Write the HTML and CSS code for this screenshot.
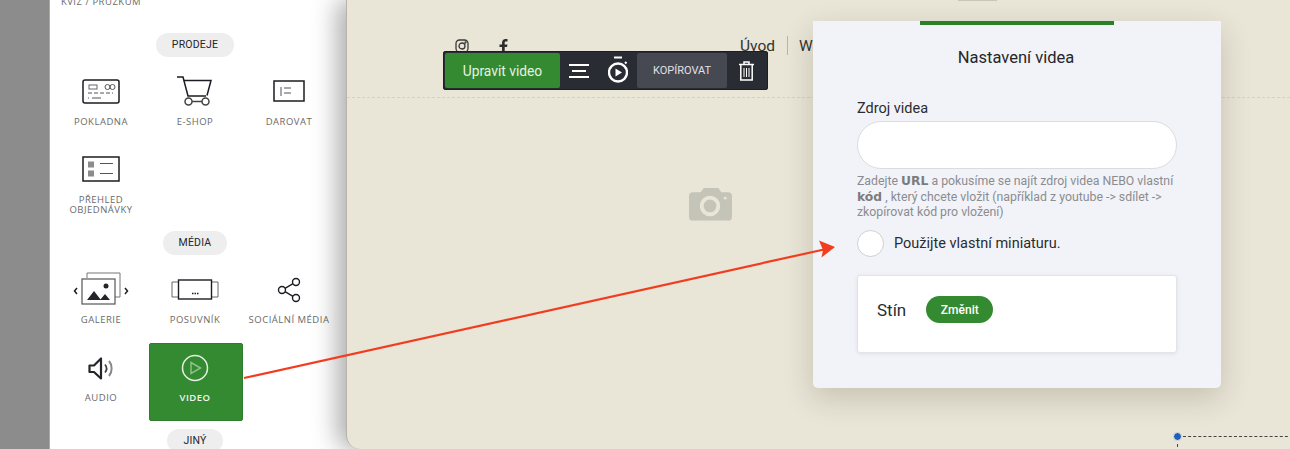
FILE: index.html
```html
<!DOCTYPE html>
<html lang="cs">
<head>
<meta charset="utf-8">
<title>Nastavení videa</title>
<link rel="stylesheet" href="styles.css">
</head>
<body>
<div class="app">
  <div class="rail"></div>
  <aside class="sidebar">
    <div class="grid first-grid">
      <div class="item"><div class="icon"></div><div class="label">KVÍZ / PRŮZKUM</div></div>
    </div>
    <div class="pill-row"><span class="pill">PRODEJE</span></div>
    <div class="grid">
      <div class="item">
        <div class="icon"><svg width="38" height="25" viewBox="0 0 38 25" fill="none" stroke="#1b1d22"><rect x="1" y="1" width="36" height="23" rx="2" stroke-width="1.5"/><rect x="7" y="6" width="8" height="4" stroke="#666"/><circle cx="25.500" cy="8" r="2.500" stroke="#555"/><circle cx="30.500" cy="8" r="2.500" stroke="#555"/><path d="M6 14h25" stroke="#555" stroke-dasharray="4 2"/><path d="M6 19h1M10 19h9" stroke="#555"/></svg></div>
        <div class="label">POKLADNA</div>
      </div>
      <div class="item">
        <div class="icon"><svg width="36" height="30" viewBox="0 0 36 30" fill="none" stroke="#1b1d22" stroke-width="1.500"><path d="M0 1h6l5 19h18"/><path d="M7 4.500h27l-4 15"/><circle cx="11.500" cy="25.500" r="3.500" stroke="#444"/><circle cx="28.500" cy="25.500" r="3.500" stroke="#444"/><path d="M15 25.500h10" stroke="#444"/></svg></div>
        <div class="label">E-SHOP</div>
      </div>
      <div class="item">
        <div class="icon"><svg width="32" height="22" viewBox="0 0 32 22" fill="none" stroke="#1b1d22"><rect x="1" y="1" width="30" height="20" stroke-width="1.500"/><path d="M8 7v9M11 8h7M11 13h7" stroke="#555"/></svg></div>
        <div class="label">DAROVAT</div>
      </div>
      <div class="item">
        <div class="icon"><svg width="38" height="26" viewBox="0 0 38 26" fill="none" stroke="#1b1d22"><rect x="1" y="1" width="36" height="24" stroke-width="1.500"/><path d="M6 5.500h6v6H6zM6 14.500h6v6H6z" fill="#8c8c8c" stroke="none"/><path d="M18 7.500h13M18 17.500h13" stroke="#555"/></svg></div>
        <div class="label">PŘEHLED OBJEDNÁVKY</div>
      </div>
    </div>
    <div class="pill-row"><span class="pill">MÉDIA</span></div>
    <div class="grid">
      <div class="item">
        <div class="icon"><svg width="56" height="34" viewBox="0 0 56 34" fill="none" stroke="#555"><path d="M14 6V1h33v24h-6" stroke="#777"/><rect x="9" y="7" width="33" height="25" stroke-width="1.200" fill="#fff"/><path d="M14 28l7-9 7 9zM27 28l5-6 5 6z" fill="#23252b" stroke="none"/><circle cx="33" cy="14" r="2.500" fill="#23252b" stroke="none"/><path d="M4 16l-2.500 3L4 22M52 16l2.500 3L52 22" stroke="#1b1d22" stroke-width="1.500"/></svg></div>
        <div class="label">GALERIE</div>
      </div>
      <div class="item">
        <div class="icon"><svg width="48" height="21" viewBox="0 0 48 21" fill="none"><path d="M7 3H1v15h6M41 3h6v15h-6" stroke="#666"/><rect x="7.500" y="1" width="33" height="19" stroke="#1b1d22" stroke-width="1.400"/><path d="M21 14.500h1.500M23.500 14.500H25M26 14.500h1.500" stroke="#1b1d22" stroke-width="1.500"/></svg></div>
        <div class="label">POSUVNÍK</div>
      </div>
      <div class="item low">
        <div class="icon"><svg width="24" height="26" viewBox="0 0 24 26" fill="none" stroke="#1b1d22" stroke-width="1.400"><circle cx="5" cy="13" r="3.500"/><circle cx="19" cy="5" r="3.500"/><circle cx="19" cy="21" r="3.500"/><path d="M8 11.300l8-4.600M8 14.700l8 4.600"/></svg></div>
        <div class="label">SOCIÁLNÍ MÉDIA</div>
      </div>
      <div class="item low">
        <div class="icon"><svg width="26" height="25" viewBox="0 0 26 25" fill="none"><path d="M1.500 9.500h4.500l7-7v20l-7-6.500H1.500z" stroke="#23252b" stroke-width="2.200" stroke-linejoin="round"/><path d="M17 8.500c2 2.500 2 5.500 0 8" stroke="#444" stroke-width="1.800"/><path d="M21 5c3.500 4 3.500 11 0 15" stroke="#888" stroke-width="2"/></svg></div>
        <div class="label">AUDIO</div>
      </div>
      <div class="item active">
        <div class="icon"><svg width="28" height="28" viewBox="0 0 28 28" fill="none"><circle cx="14" cy="14" r="12.500" stroke="#e6f0e4" stroke-width="1.500"/><path d="M10 8.500l9.500 5.500-9.500 5.500z" stroke="#8fc08a" stroke-width="1.500"/></svg></div>
        <div class="label">VIDEO</div>
      </div>
    </div>
    <div class="pill-row"><span class="pill">JINÝ</span></div>
  </aside>
  <main class="canvas">
    <span class="top-mark"></span>
    <header class="site-head">
      <svg class="social" width="14" height="14" viewBox="0 0 14 14" fill="none" stroke="#3a3a3a" stroke-width="1.300"><rect x="1" y="1" width="12" height="12" rx="3.500"/><circle cx="7" cy="7" r="3"/><circle cx="10.500" cy="3.500" r=".5"/></svg>
      <svg class="social" width="9" height="14" viewBox="0 0 9 14"><path d="M3 14V8H.5V5.500H3V4c0-2.500 1.500-4 3.500-4H8.500v2.500H7c-1 0-1.300.5-1.300 1.300v1.700h2.800L8 8H5.700v6z" fill="#2e2e2e"/></svg>
      <nav class="site-nav"><span>Úvod</span><i></i><span>Web</span></nav>
    </header>
    <div class="placeholder"><svg width="43" height="34" viewBox="0 0 44 34"><path d="M4 5h8l3-4.500h15L33 5h7a4 4 0 0 1 4 4v21a4 4 0 0 1-4 4H4a4 4 0 0 1-4-4V9a4 4 0 0 1 4-4z" fill="#c4c4b9"/><circle cx="21.500" cy="19" r="8.500" fill="#c4c4b9" stroke="#e9e5d7" stroke-width="4"/><circle cx="37" cy="11" r="1.500" fill="#e9e5d7"/></svg></div>
    <div class="corner-marker"><span class="dot"></span><span class="dash-h"></span><span class="dash-v"></span></div>
  </main>

  <div class="toolbar">
    <button class="tb-edit">Upravit video</button>
    <span class="tb-ic tb-align"><svg width="20" height="14" viewBox="0 0 20 14" stroke="#fff" stroke-width="2"><path d="M0 1h20M3 7h14M0 13h20"/></svg></span>
    <span class="tb-ic tb-timer"><svg width="20" height="30" viewBox="0 0 20 30" fill="none"><path d="M6 1.500h8" stroke="#fff" stroke-width="2"/><circle cx="10" cy="16.500" r="9" stroke="#fff" stroke-width="2.400"/><path d="M7.500 12.500l6.500 4-6.500 4z" fill="#fff"/><path d="M17 6l1.500 1.500" stroke="#fff" stroke-width="2"/></svg></span>
    <button class="tb-copy">KOPÍROVAT</button>
    <span class="tb-ic tb-trash"><svg width="15" height="20" viewBox="0 0 15 20" fill="none" stroke="#fff"><path d="M0 3.500h15" stroke-width="1.500"/><path d="M5 3V1h5v2" stroke-width="1.500"/><path d="M1.800 4v15h11.400V4" stroke-width="1.500"/><path d="M5 7v9M7.500 7v9M10 7v9"/></svg></span>
  </div>

  <section class="panel">
    <div class="panel-accent"></div>
    <h2 class="panel-title">Nastavení videa</h2>
    <label class="field-label">Zdroj videa</label>
    <div class="input"></div>
    <p class="help">Zadejte <b>URL</b> a pokusíme se najít zdroj videa NEBO vlastní <b>kód</b> , který chcete vložit (například z youtube -&gt; sdílet -&gt; zkopírovat kód pro vložení)</p>
    <div class="check-row"><span class="check"></span><span>Použijte vlastní miniaturu.</span></div>
    <div class="card"><span class="card-name">Stín</span><button class="change">Změnit</button></div>
  </section>

  <svg class="arrow" width="1290" height="449" viewBox="0 0 1290 449"><path d="M244 378L824 249.500" stroke="#f23c1f" stroke-width="2.200" fill="none"/><path d="M835 247L819 240.500 823 250 821.500 257.500z" fill="#f23c1f"/></svg>
</div>
</body>
</html>
```
FILE: styles.css
```css
* { box-sizing: border-box; }
html, body { margin: 0; height: 100%; overflow: hidden; }
body { font-family: Roboto, "Liberation Sans", sans-serif; color: #24262b; }
.app { position: relative; display: flex; width: 1290px; height: 449px; overflow: hidden; }
.rail { width: 50px; flex: none; background: #8c8c8c; border-right: 1px solid #a8a8a8; }
.sidebar { width: 296px; flex: none; background: #fff; padding: 0 10px 0 4px; overflow: hidden; }
.first-grid { margin-top: -53px; }
.grid { display: grid; grid-template-columns: repeat(3, 94px); grid-auto-rows: 78px; }
.item { display: flex; flex-direction: column; align-items: center; border-radius: 2px; }
.icon { height: 44px; padding-top: 4px; display: flex; align-items: center; justify-content: center; flex: none; }
.low .icon { padding-top: 6px; }
.label { margin-top: 6px; font: 400 9.500px/10px "Open Sans", sans-serif; letter-spacing: .5px; color: #6a6a6a; text-align: center; white-space: nowrap; }
.item:nth-child(4) .label { white-space: normal; width: 70px; }
.active { background: #338a30; border: 1px solid #2e7c2c; margin: 0 -1px 0 1px; padding-right: 2px; }
.active .icon { height: 43px; padding-top: 5px; }
.active .label { color: #f2f7f1; font-weight: 600; }
.pill-row { display: flex; justify-content: center; margin: 8px 0 10px; }
.pill { height: 24px; line-height: 24px; padding: 0 16px; border-radius: 12px; background: #eeeeee; font-size: 10.500px; letter-spacing: .2px; color: #24262b; }

.canvas { position: relative; flex: 1; background: #e9e5d7; border-left: 1px solid #b5b3aa; border-bottom-left-radius: 14px; box-shadow: -8px 0 26px rgba(0, 0, 0, .34); }
.top-mark { position: absolute; left: 611px; top: 0; width: 39px; height: 1px; background: #c9c6b8; }
.site-head { height: 98px; border-bottom: 1px dashed #d6d2c2; padding: 39px 0 0 108px; display: flex; align-items: flex-start; gap: 30px; }
.site-nav { margin-left: 202px; margin-top: -3px; display: flex; align-items: center; font-size: 15.500px; color: #33332f; line-height: 14px; }
.site-nav i { width: 1px; height: 19px; background: #b9b6a9; margin: 0 11px 0 12px; }
.placeholder { display: flex; justify-content: center; padding: 89px 0 0 0; margin-left: -217px; }
.corner-marker { position: absolute; left: 826px; top: 432px; width: 120px; height: 17px; }
.dot { position: absolute; left: 0; top: 0; width: 9px; height: 9px; border-radius: 50%; background: #1e5fc0; border: 1px solid #e9e5d7; }
.dash-h { position: absolute; left: 10px; top: 4px; right: 0; border-top: 1px dashed #444; }
.dash-v { position: absolute; left: 4px; top: 12px; height: 8px; border-left: 1px dashed #444; }

.toolbar { position: absolute; left: 443px; top: 51px; width: 325px; height: 39px; padding: 2px; display: flex; background: #2a2c33; border-radius: 3px; box-shadow: 0 0 0 1px #1d1e22 inset; }
.toolbar button { flex: none; border: 0; font-family: Roboto, sans-serif; padding: 0; }
.tb-edit { width: 115px; background: #338a30; color: #e6f1e3; font-size: 13.800px; border-radius: 2px; }
.tb-ic { display: flex; align-items: center; justify-content: center; flex: none; }
.tb-align { width: 38px; }
.tb-timer { width: 39px; }
.tb-copy { width: 90px; background: #464852; color: #e0e1e5; font-size: 11px; border-radius: 2px; }
.tb-trash { width: 39px; }

.panel { position: absolute; left: 813px; top: 21px; width: 408px; height: 367px; padding: 0 44px; background: #f2f3f8; border-radius: 0 0 5px 5px; box-shadow: 0 10px 30px rgba(60, 55, 30, .2); }
.panel-accent { position: absolute; left: 107px; top: 0; width: 194px; height: 4px; background: #2a8028; }
.panel-title { margin: 0 2px 0 0; padding-top: 27px; text-align: center; font-weight: 400; font-size: 16.500px; line-height: 19px; color: #24262b; }
.field-label { display: block; margin-top: 33px; font-size: 14.500px; line-height: 18px; color: #2a2c30; }
.input { margin-top: 3px; height: 48px; background: #fff; border: 1px solid #dcdce0; border-radius: 24px; }
.help { margin: 5px 0 0; font-size: 12.300px; line-height: 15.700px; color: #8a8c91; }
.help b { font-family: "DejaVu Sans", sans-serif; font-size: 12.300px; line-height: 1; font-weight: 700; color: #7b7c80; }
.check-row { display: flex; align-items: center; gap: 10px; margin-top: 9px; font-size: 14.500px; color: #2a2c30; }
.check { width: 27px; height: 27px; border-radius: 50%; background: #fff; border: 1px solid #cfcfd3; }
.card { display: flex; align-items: flex-start; margin-top: 18px; height: 78px; padding: 20px 19px; background: #fff; border: 1px solid #e3e3e8; border-radius: 3px; box-shadow: 0 1px 4px rgba(0, 0, 0, .08); }
.card-name { font-size: 17px; line-height: 28px; color: #2a2c30; margin-right: 20px; }
.change { width: 67px; height: 27px; background: #338a30; color: #fff; border: 0; border-radius: 14px; font: 500 12px Roboto, sans-serif; padding: 0; }
.arrow { position: absolute; left: 0; top: 0; pointer-events: none; }
```
